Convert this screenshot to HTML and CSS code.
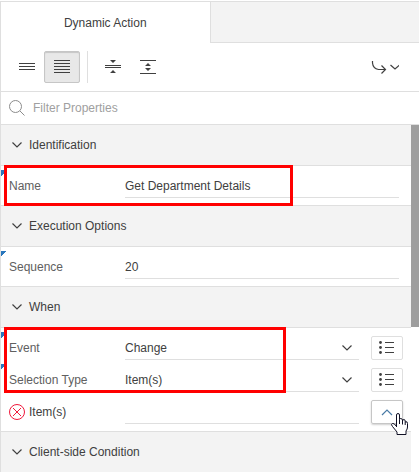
FILE: index.html
```html
<!DOCTYPE html>
<html lang="en">
<head>
<meta charset="utf-8">
<title>Dynamic Action</title>
<meta name="viewport" content="width=device-width, initial-scale=1">
<link rel="stylesheet" href="styles.css">
</head>
<body>
<main class="panel">
  <div class="tabs" role="tablist">
    <button class="tab" type="button" role="tab" aria-selected="true">Dynamic Action</button>
    <div class="tabs-rest"></div>
  </div>

  <div class="toolbar" role="toolbar" aria-label="Property editor">
    <button class="tool" type="button" aria-label="Show common">
      <svg width="16" height="16" viewBox="0 0 16 16" fill="#404040"><path d="M0 4h16v1H0zM0 7h16v1H0zM0 10h16v1H0z"/></svg>
    </button>
    <button class="tool tool-on" type="button" aria-label="Show all" aria-pressed="true">
      <svg width="16" height="16" viewBox="0 0 16 16" fill="#404040"><path d="M0 1h16v1H0zM0 4h16v1H0zM0 7h16v1H0zM0 10h16v1H0zM0 13h16v1H0z"/></svg>
    </button>
    <span class="divider"></span>
    <button class="tool" type="button" aria-label="Collapse all">
      <svg width="16" height="16" viewBox="0 0 16 16" fill="#404040"><path d="M0 6h16v1H0zM0 8h16v1H0zM5 1h6L8 4zM5 14h6L8 11z"/></svg>
    </button>
    <button class="tool" type="button" aria-label="Expand all">
      <svg width="16" height="16" viewBox="0 0 16 16" fill="#404040"><path d="M0 1h16v1H0zM0 14h16v1H0zM5 7h6L8 4zM5 9h6L8 12z"/></svg>
    </button>
    <button class="tool goto" type="button" aria-label="Go to">
      <svg width="28" height="16" viewBox="0 0 28 16" fill="none" stroke="#404040" stroke-width="1.200"><path d="M1.500 2v2Q2 9.500 7.500 10.500H14.500M10.500 6.500l4 4-4 4M19.500 6l4.500 4 4.500-4"/></svg>
    </button>
  </div>

  <label class="search">
    <svg width="16" height="16" viewBox="0 0 16 16" fill="none" stroke="#8c8c8c"><circle cx="6.500" cy="6.500" r="6"/><path d="M11 11l4.500 4.500"/></svg>
    <input type="text" placeholder="Filter Properties" aria-label="Filter Properties">
  </label>

  <div class="scroller">
    <div class="groups">
      <section class="group">
        <h2><button class="group-head" type="button" aria-expanded="true"><svg class="chevron" viewBox="0 0 10 6"><path d="M.5.5L5 5 9.500.5"/></svg>Identification</button></h2>
        <div class="group-body">
          <div class="mark mark-name"></div>
          <div class="prop changed"><label for="name">Name</label><div class="field wide"><input id="name" type="text" value="Get Department Details"></div></div>
        </div>
      </section>

      <section class="group">
        <h2><button class="group-head" type="button" aria-expanded="true"><svg class="chevron" viewBox="0 0 10 6"><path d="M.5.5L5 5 9.500.5"/></svg>Execution Options</button></h2>
        <div class="group-body">
          <div class="prop changed"><label for="sequence">Sequence</label><div class="field wide"><input id="sequence" type="text" value="20"></div></div>
        </div>
      </section>

      <section class="group">
        <h2><button class="group-head" type="button" aria-expanded="true"><svg class="chevron" viewBox="0 0 10 6"><path d="M.5.5L5 5 9.500.5"/></svg>When</button></h2>
        <div class="group-body">
          <div class="mark mark-when"></div>
          <div class="prop changed">
            <label for="event">Event</label>
            <div class="field"><select id="event"><option>Change</option></select><svg class="chevron" viewBox="0 0 10 6"><path d="M.5.5L5 5 9.500.5"/></svg></div>
            <button class="pick" type="button" aria-label="Event list"><svg width="16" height="14" viewBox="0 0 16 14" fill="#404040"><circle cx="1.500" cy="1.500" r="1.400"/><circle cx="1.500" cy="6.500" r="1.400"/><circle cx="1.500" cy="11.500" r="1.400"/><path d="M6 1h9v1H6zM6 6h9v1H6zM6 11h9v1H6z"/></svg></button>
          </div>
          <div class="prop changed">
            <label for="selection">Selection Type</label>
            <div class="field"><select id="selection"><option>Item(s)</option></select><svg class="chevron" viewBox="0 0 10 6"><path d="M.5.5L5 5 9.500.5"/></svg></div>
            <button class="pick" type="button" aria-label="Selection type list"><svg width="16" height="14" viewBox="0 0 16 14" fill="#404040"><circle cx="1.500" cy="1.500" r="1.400"/><circle cx="1.500" cy="6.500" r="1.400"/><circle cx="1.500" cy="11.500" r="1.400"/><path d="M6 1h9v1H6zM6 6h9v1H6zM6 11h9v1H6z"/></svg></button>
          </div>
          <div class="prop">
            <label class="invalid" for="items"><svg width="16" height="16" viewBox="0 0 16 16" fill="none" stroke="#f0193c"><circle cx="8" cy="8" r="7.500"/><path d="M4 4l8 8M12 4l-8 8"/></svg>Item(s)</label>
            <div class="field"><input id="items" type="text"></div>
            <button class="pick pick-hover" type="button" aria-label="Choose items">
              <svg width="12" height="7" viewBox="0 0 12 7" fill="none" stroke="#4a7ba6" stroke-width="1.200"><path d="M1 6l5-5 5 5"/></svg>
              <svg class="pointer" width="17" height="22" viewBox="0 0 17 22"><path d="M5.500 14V2Q5.500.5 7 .5T8.500 2v4.500Q8.500 5.500 9.800 5.500T11.500 7v1Q11.700 6.500 12.900 6.500T14.200 8v1Q16.500 7.800 16.500 10.500V14q0 2-1.500 4v3.500H6V19L1.500 13.500Q-.5 11.300 1.300 10.500T5.500 13.500M8.500 6.500V11M11.500 8v3.500M14.200 9v3" fill="#fff" stroke="#101024"/></svg>
            </button>
          </div>
        </div>
      </section>

      <section class="group">
        <h2><button class="group-head" type="button" aria-expanded="true"><svg class="chevron" viewBox="0 0 10 6"><path d="M.5.5L5 5 9.500.5"/></svg>Client-side Condition</button></h2>
      </section>
    </div>
    <div class="track"><div class="thumb"></div></div>
  </div>
</main>
</body>
</html>
```
FILE: styles.css
```css
* { box-sizing: border-box; }

body {
  margin: 0;
  background: #fff;
  color: #404040;
  font: 12px/16px "Liberation Sans", Arial, sans-serif;
}

button, input, select {
  margin: 0;
  padding: 0;
  border: 0;
  outline: 0;
  background: none;
  color: inherit;
  font: inherit;
}

svg { display: block; flex: none; }

.panel {
  display: flex;
  flex-direction: column;
  height: 100vh;
  padding-top: 1px;
  overflow: hidden;
}

.tabs, .toolbar, .search, .scroller { border-left: 1px solid #dfdfdf; }

.tabs {
  display: flex;
  flex: none;
  height: 42px;
  border-top: 1px solid #dfdfdf;
}

.tab { flex: 1; }

.tabs-rest {
  flex: 1;
  border: solid #dfdfdf;
  border-width: 0 0 1px 1px;
  background: #f3f3f3;
}

.toolbar {
  display: flex;
  flex: none;
  align-items: center;
  padding: 8px;
  border-bottom: 1px solid #dfdfdf;
}

.tool {
  display: flex;
  align-items: center;
  justify-content: center;
  width: 36px;
  height: 32px;
}

.tool + .tool { margin-left: -1px; }

.tool-on {
  border: 1px solid #c6c6c6;
  border-radius: 2px;
  background: #e8e8e8;
  box-shadow: inset 0 1px 1px #c6c6c6;
}

.divider {
  width: 1px;
  height: 32px;
  margin: 0 7px;
  background: #dfdfdf;
}

.toolbar .goto { margin-left: auto; margin-right: 8px; }

.search {
  display: flex;
  flex: none;
  align-items: center;
  gap: 8px;
  height: 33px;
  padding: 0 8px;
  border-bottom: 1px solid #dfdfdf;
}

.search input { flex: 1; min-width: 0; }
.search input::placeholder { color: #a0a0a0; opacity: 1; }

.scroller {
  display: flex;
  flex: 1;
  min-height: 0;
  overflow: hidden;
}

.groups { flex: 1; min-width: 0; }

h2 { margin: 0; font: inherit; }

.group-head {
  display: flex;
  align-items: center;
  gap: 7px;
  width: 100%;
  height: 41px;
  padding: 0 11px;
  border-bottom: 1px solid #dfdfdf;
  background: #f3f3f3;
}

.chevron {
  width: 10px;
  height: 6px;
  fill: none;
  stroke: #404040;
  stroke-width: 1.2;
}

.group-body {
  position: relative;
  padding: 4px 0 3px;
  border-bottom: 1px solid #dfdfdf;
}

.prop {
  display: flex;
  align-items: center;
  height: 32px;
  padding: 4px 8px;
}

.changed {
  background: linear-gradient(135deg, #2a77bd 50%, transparent 50%) 0 0 / 6px 6px no-repeat;
}

.prop label { flex: none; width: 116px; color: #606060; }

.prop .invalid {
  display: flex;
  align-items: center;
  gap: 4px;
  color: #404040;
}

.field {
  display: flex;
  flex: 1;
  align-items: center;
  min-width: 0;
  height: 24px;
  margin-right: 12px;
  padding-bottom: 1px;
  padding-right: 7px;
  box-shadow: inset 0 -1px #dfdfdf;
}

.wide { margin-right: 4px; }

.field input, .field select { flex: 1; min-width: 0; height: 22px; }
.field select { appearance: none; }

.pick {
  position: relative;
  display: flex;
  align-items: center;
  justify-content: center;
  width: 32px;
  height: 24px;
  border: 1px solid #dfdfdf;
  border-radius: 2px;
}

.pick-hover {
  border-color: #c6c6c6;
  box-shadow: 0 1px 2px #d0d0d0;
}

.pointer { position: absolute; left: 19px; top: 12px; z-index: 1; }

/* Callout frames drawn over the properties */
.mark {
  position: absolute;
  z-index: 1;
  left: 3px;
  top: -1px;
  border: 3px solid #f00;
  pointer-events: none;
}

.mark-name { width: 289px; height: 41px; }
.mark-when { width: 282px; height: 66px; }

.track { width: 8px; }
.thumb { height: 58.2%; background: #9e9e9e; }
```
